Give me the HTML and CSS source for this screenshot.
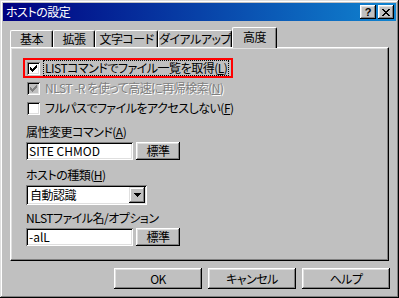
FILE: index.html
```html
<!DOCTYPE html>
<html lang="ja">
<head>
    <meta charset="UTF-8">
    <title>ホストの設定</title>
    <link rel="stylesheet" href="styles.css">
</head>
<body>
    <div class="window">
        <div class="titlebar">
            <span class="title">ホストの設定</span>
            <div class="title-buttons">
                <span class="tbtn help-btn">?</span>
                <span class="tbtn close-btn">
                    <svg width="8" height="7" viewBox="0 0 8 7"><path d="M0 0h2v1h1v1h2V1h1V0h2v1H7v1H6v1H5v1h1v1h1v1h1v1H6V6H5V5H3v1H2v1H0V6h1V5h1V4h1V3H2V2H1V1H0z" fill="#000"/></svg>
                </span>
            </div>
        </div>

        <div class="content">
            <div class="tabs">
                <div class="tab w-basic">基本</div>
                <div class="tab w-ext">拡張</div>
                <div class="tab w-code">文字コード</div>
                <div class="tab w-dial">ダイアルアップ</div>
                <div class="tab active">高度</div>
            </div>

            <div class="panel">
                <div class="check-row highlight">
                    <span class="checkbox"><svg width="7" height="7" viewBox="0 0 7 7"><path d="M6 0h1v3H6v1H5v1H4v1H3v1H2V6H1V5H0V2h1v1h1v1h1V3h1V2h1V1h1z" fill="#000"/></svg></span>
                    <span class="check-label focus">LISTコマンドでファイル一覧を取得(<u>L</u>)</span>
                </div>
                <div class="check-row disabled">
                    <span class="checkbox"><svg width="7" height="7" viewBox="0 0 7 7"><path d="M6 0h1v3H6v1H5v1H4v1H3v1H2V6H1V5H0V2h1v1h1v1h1V3h1V2h1V1h1z" fill="#808080"/></svg></span>
                    <span class="check-label">NLST -R を使って高速に再帰検索(<u>N</u>)</span>
                </div>
                <div class="check-row">
                    <span class="checkbox"></span>
                    <span class="check-label">フルパスでファイルをアクセスしない(<u>F</u>)</span>
                </div>

                <div class="field-label first">属性変更コマンド(<u>A</u>)</div>
                <div class="field-row">
                    <div class="textbox">SITE CHMOD</div>
                    <div class="button small">標準</div>
                </div>

                <div class="field-label second">ホストの種類(<u>H</u>)</div>
                <div class="field-row">
                    <div class="select">
                        <span class="select-value">自動認識</span>
                        <span class="select-arrow"><svg width="7" height="4" viewBox="0 0 7 4"><path d="M0 0h7v1H6v1H5v1H4v1H3V3H2V2H1V1H0z" fill="#000"/></svg></span>
                    </div>
                </div>

                <div class="field-label third">NLSTファイル名/オプション</div>
                <div class="field-row">
                    <div class="textbox">-alL</div>
                    <div class="button small">標準</div>
                </div>
            </div>

            <div class="actions">
                <div class="button action">OK</div>
                <div class="button action">キャンセル</div>
                <div class="button action">ヘルプ</div>
            </div>
        </div>
    </div>
</body>
</html>
```

FILE: styles.css
```css
body {
    margin: 0;
    background-color: #c0c0c0;
    font-family: "Noto Sans CJK JP", "Liberation Sans", sans-serif;
    font-size: 12px;
    line-height: 16px;
    letter-spacing: -0.5px;
    white-space: nowrap;
    color: #000;
    font-feature-settings: "palt";
}

.window {
    width: 399px;
    height: 298px;
    box-sizing: border-box;
    padding: 3px;
    background-color: #c0c0c0;
    box-shadow: inset -1px -1px #000, inset 1px 1px #dfdfdf, inset -2px -2px #808080, inset 2px 2px #fff;
}

/* title bar */
.titlebar {
    height: 18px;
    display: flex;
    align-items: center;
    justify-content: space-between;
    padding: 0 2px 0 3px;
    background: linear-gradient(90deg, #000080, #1084d0);
    color: #fff;
}

.title {
    font-size: 12px;
}

.title-buttons {
    display: flex;
    gap: 2px;
}

.tbtn {
    width: 16px;
    height: 14px;
    box-sizing: border-box;
    display: flex;
    align-items: center;
    justify-content: center;
    background-color: #c0c0c0;
    box-shadow: inset -1px -1px #000, inset 1px 1px #fff, inset -2px -2px #808080, inset 2px 2px #dfdfdf;
}

.help-btn {
    color: #000;
    font-family: "Liberation Sans", sans-serif;
    font-weight: bold;
    font-size: 11px;
    line-height: 14px;
    letter-spacing: 0;
}

/* tabs */
.content {
    padding: 6px 7px 0 7px;
}

.tabs {
    display: flex;
    align-items: flex-end;
    height: 21px;
    position: relative;
    z-index: 1;
}

.tab {
    height: 17px;
    box-sizing: border-box;
    margin-bottom: 1px;
    text-align: center;
    line-height: 16px;
    border-top: 1px solid #fff;
    border-left: 1px solid #fff;
    border-right: 1px solid #000;
    border-radius: 2px 2px 0 0;
    box-shadow: inset -1px 0 #808080;
}

.w-basic { width: 43px; }
.w-ext { width: 42px; }
.w-code { width: 63px; }
.w-dial { width: 74px; }

.tab.active {
    width: 45px;
    height: 21px;
    margin-bottom: 0;
    line-height: 17px;
    background-color: #c0c0c0;
}

/* panel */
.panel {
    height: 214px;
    box-sizing: border-box;
    margin-top: -1px;
    padding: 10px 0 0 15px;
    border-top: 1px solid #fff;
    border-left: 1px solid #fff;
    border-right: 1px solid #000;
    border-bottom: 1px solid #000;
    box-shadow: inset -1px -1px #808080, inset 1px 1px #dfdfdf;
}

.check-row {
    height: 20px;
    display: flex;
    align-items: center;
    padding-left: 1px;
}

.check-row.highlight {
    width: 210px;
    box-sizing: border-box;
    margin-left: -3px;
    padding-left: 2px;
    border: 2px solid #ff0000;
}

.checkbox {
    width: 13px;
    height: 13px;
    flex: none;
    box-sizing: border-box;
    display: flex;
    align-items: center;
    justify-content: center;
    background-color: #fff;
    box-shadow: inset 1px 1px #808080, inset -1px -1px #fff, inset 2px 2px #000, inset -2px -2px #dfdfdf;
}

.check-label {
    margin-left: 4px;
    padding: 0 1px;
    line-height: 14px;
}

.check-label.focus {
    outline: 1px dotted #000;
}

.disabled .checkbox {
    background-color: #c0c0c0;
}

.disabled .check-label {
    color: #808080;
    text-shadow: 1px 1px #fff;
}

/* fields */
.field-label.first { margin-top: 6px; }
.field-label.second { margin-top: 7px; }
.field-label.third { margin-top: 5px; }

.field-row {
    display: flex;
    gap: 3px;
    margin-top: 2px;
}

.textbox {
    width: 107px;
    height: 18px;
    box-sizing: border-box;
    padding: 1px 3px;
    background-color: #fff;
    line-height: 16px;
    letter-spacing: 0;
    box-shadow: inset 1px 1px #808080, inset -1px -1px #fff, inset 2px 2px #000, inset -2px -2px #dfdfdf;
}

.button {
    box-sizing: border-box;
    display: flex;
    align-items: center;
    justify-content: center;
    background-color: #c0c0c0;
    box-shadow: inset -1px -1px #000, inset 1px 1px #fff, inset -2px -2px #808080, inset 2px 2px #dfdfdf;
}

.button.small {
    width: 44px;
    height: 18px;
}

.select {
    width: 121px;
    height: 20px;
    box-sizing: border-box;
    display: flex;
    align-items: center;
    justify-content: space-between;
    padding: 2px;
    background-color: #fff;
    box-shadow: inset 1px 1px #808080, inset -1px -1px #fff, inset 2px 2px #000, inset -2px -2px #dfdfdf;
}

.select-value {
    padding-left: 2px;
}

.select-arrow {
    width: 16px;
    height: 16px;
    box-sizing: border-box;
    display: flex;
    align-items: center;
    justify-content: center;
    background-color: #c0c0c0;
    box-shadow: inset -1px -1px #000, inset 1px 1px #dfdfdf, inset -2px -2px #808080, inset 2px 2px #fff;
}

/* bottom buttons */
.actions {
    display: flex;
    justify-content: flex-end;
    gap: 6px;
    margin-top: 7px;
    margin-right: -1px;
}

.button.action {
    width: 88px;
    height: 21px;
}
```
